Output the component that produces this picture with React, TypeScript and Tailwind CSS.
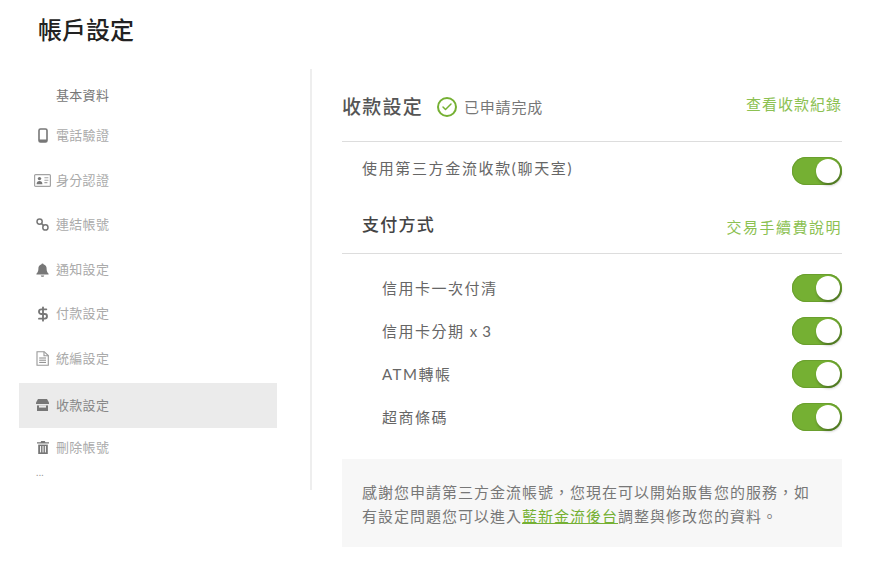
import { Check, DollarSign } from 'lucide-react';
import type { ReactNode } from 'react';

const font = "font-['Lato','Noto_Sans_CJK_TC',sans-serif]";

const PhoneIcon = () => (
  <svg width="10" height="15" viewBox="0 0 10 15">
    <rect x="1" y="1" width="8" height="13" rx="1.5" fill="none" stroke="currentColor" strokeWidth="1.6" />
    <rect x="1" y="11.5" width="8" height="2.5" fill="currentColor" />
  </svg>
);

const CardIcon = () => (
  <svg width="17" height="13" viewBox="0 0 17 13">
    <rect x="0.6" y="0.6" width="15.8" height="11.8" rx="1" fill="none" stroke="#a3a3a3" strokeWidth="1.2" />
    <circle cx="5.5" cy="4.6" r="1.7" fill="#777" />
    <path d="M2.6 10.2c0-2.2 1.2-3.2 2.9-3.2s2.9 1 2.9 3.2z" fill="#777" />
    <path d="M10.4 3.8h4M10.4 6.2h4M10.4 8.6h3" stroke="#a3a3a3" strokeWidth="1.1" />
  </svg>
);

const LinkIcon = () => (
  <svg width="13" height="13" viewBox="0 0 13 13">
    <circle cx="3.6" cy="3.6" r="2.6" fill="none" stroke="currentColor" strokeWidth="1.5" />
    <circle cx="9.4" cy="9.4" r="2.6" fill="none" stroke="currentColor" strokeWidth="1.5" />
    <path d="M5.6 5.6l1.8 1.8" stroke="currentColor" strokeWidth="1.5" />
  </svg>
);

const BellIcon = () => (
  <svg width="13" height="14" viewBox="0 0 13 14">
    <path
      d="M6.5 0.6c.7 0 1.1.4 1.2 1 1.9.5 2.9 2 2.9 4 0 2.6.6 3.9 2 5.2v.8H.4v-.8c1.4-1.3 2-2.6 2-5.2 0-2 1-3.5 2.9-4 .1-.6.5-1 1.2-1z"
      fill="currentColor"
    />
    <path d="M4.8 12.4h3.4c0 .8-.7 1.4-1.7 1.4s-1.7-.6-1.7-1.4z" fill="currentColor" />
  </svg>
);

const DocIcon = () => (
  <svg width="13" height="15" viewBox="0 0 13 15">
    <path d="M1 .7h7.2L12.3 4.6v9.7H1z" fill="none" stroke="#999" strokeWidth="1.1" />
    <path d="M8 .7v4h4.3" fill="none" stroke="#999" strokeWidth="1.1" />
    <path d="M3.2 7h6.8M3.2 9.2h6.8M3.2 11.4h6.8" stroke="#888" strokeWidth="1" />
  </svg>
);

const StoreIcon = () => (
  <svg width="13" height="12" viewBox="0 0 13 12">
    <path d="M2 0h9l2 3.4V5H0V3.4z" fill="currentColor" />
    <path d="M1 6.4h11V12H1z" fill="currentColor" />
    <path d="M3 6.4h7v2.2H3z" fill="#ebebeb" />
  </svg>
);

const TrashIcon = () => (
  <svg width="12" height="13" viewBox="0 0 12 13">
    <path d="M4.2 0h3.6l.6 1.2H12v1.4H0V1.2h3.6z" fill="currentColor" />
    <path d="M1.2 3.6h9.6V13H1.2z" fill="currentColor" />
    <path d="M3.6 5v6.4M6 5v6.4M8.4 5v6.4" stroke="#fff" strokeWidth="1" />
  </svg>
);

const navItems = [
  { label: '電話驗證', icon: <PhoneIcon /> },
  { label: '身分認證', icon: <CardIcon /> },
  { label: '連結帳號', icon: <LinkIcon /> },
  { label: '通知設定', icon: <BellIcon /> },
  { label: '付款設定', icon: <DollarSign className="h-[16px] w-[16px]" strokeWidth={2.8} /> },
  { label: '統編設定', icon: <DocIcon /> },
];

const Toggle = () => (
  <div className="relative h-[28px] w-[50px] rounded-full bg-[#75b033] shadow-[inset_0_0_0_1px_#6a9f2e]">
    <div className="absolute right-[2px] top-[2px] h-[24px] w-[24px] rounded-full bg-white shadow-[1px_2px_3px_rgba(0,0,0,0.35)]" />
  </div>
);

const Row = ({ children }: { children: ReactNode }) => (
  <div className="flex h-[43px] items-center justify-between pl-[40px] text-[15px] tracking-[1.5px] text-[#666]">
    <span className="pt-[2px]">{children}</span>
    <Toggle />
  </div>
);

export default function App() {
  return (
    <div className={`${font} h-[569px] w-[895px] overflow-hidden bg-white`}>
      <h1 className="pl-[38px] pt-[14px] text-[24px] font-medium leading-[32px] text-[#222]">帳戶設定</h1>

      <div className="mt-[23px] flex">
        <aside className="h-[421px] w-[312px] border-r-2 border-[#eeeeee] pl-[19px] pr-[33px] text-[13px] tracking-[0.3px]">
          <div className="flex h-[44.5px] items-center pl-[37px] pt-[9px] text-[#777]">基本資料</div>
          {navItems.map((item) => (
            <div key={item.label} className="flex h-[44.6px] items-center text-[#aaa]">
              <span className="flex w-[37px] justify-center pl-[12px] pr-[2px] text-[#777]">{item.icon}</span>
              {item.label}
            </div>
          ))}
          <div className="mt-[1.9px] flex h-[45px] items-center bg-[#ebebeb] text-[#888]">
            <span className="flex w-[37px] justify-center pl-[12px] pr-[2px] text-[#777]">
              <StoreIcon />
            </span>
            收款設定
          </div>
          <div className="flex h-[40px] items-center text-[#aaa]">
            <span className="flex w-[37px] justify-center pl-[12px] pr-[2px] text-[#777]">
              <TrashIcon />
            </span>
            刪除帳號
          </div>
          <div className="pl-[17px] text-[10px] leading-[8px] text-[#999]">...</div>
        </aside>

        <main className="ml-[30px] w-[500px]">
          <div className="flex h-[73px] items-center justify-between border-b border-[#dddddd] pt-[4px]">
            <div className="flex items-center">
              <span className="text-[19px] font-medium tracking-[1.25px] text-[#555]">收款設定</span>
              <span className="ml-[14px] flex h-[20px] w-[20px] items-center justify-center rounded-full border-2 border-[#75b033]">
                <Check className="h-[12px] w-[12px] text-[#75b033]" strokeWidth={3} />
              </span>
              <span className="ml-[7px] text-[15px] tracking-[0.8px] text-[#777]">已申請完成</span>
            </div>
            <a className="pb-[6px] text-[15px] tracking-[1px] text-[#8cc152]">查看收款紀錄</a>
          </div>

          <div className="flex h-[58px] items-center justify-between pl-[20px] text-[15px] tracking-[1.65px] text-[#666]">
            <span className="pb-[6px]">使用第三方金流收款(聊天室)</span>
            <Toggle />
          </div>

          <div className="flex h-[54px] items-center justify-between border-b border-[#dddddd] pb-[3px] pl-[20px]">
            <span className="text-[17px] font-medium tracking-[1.25px] text-[#444]">支付方式</span>
            <a className="pt-[4px] text-[15px] tracking-[1.5px] text-[#8cc152]">交易手續費說明</a>
          </div>

          <div className="pt-[12px]">
            <Row>信用卡一次付清</Row>
            <Row>
              信用卡分期 <span className="tracking-[0.5px]">x 3</span>
            </Row>
            <Row>ATM轉帳</Row>
            <Row>超商條碼</Row>
          </div>

          <div className="mt-[21px] h-[88px] bg-[#f7f7f7] px-[20px] pt-[21px] text-[15px] leading-[24px] tracking-[1px] text-[#777]">
            感謝您申請第三方金流帳號，您現在可以開始販售您的服務，如有設定問題您可以進入
            <a className="text-[#75b033] underline">藍新金流後台</a>
            調整與修改您的資料。
          </div>
        </main>
      </div>
    </div>
  );
}
